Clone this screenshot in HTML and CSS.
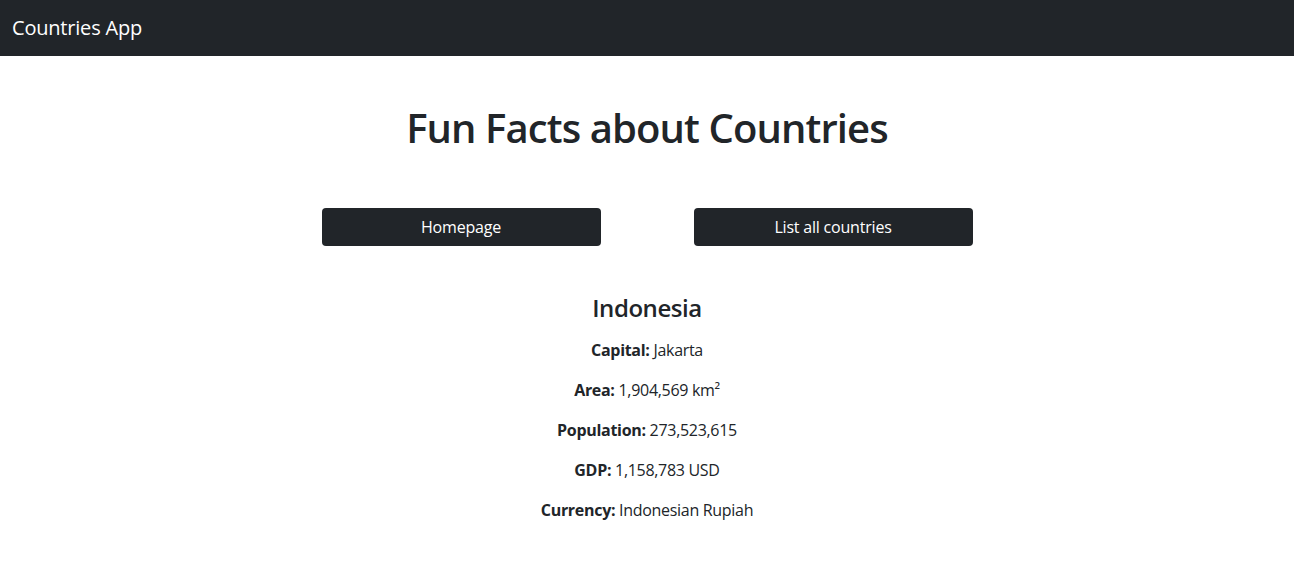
FILE: index.html
```html
<!DOCTYPE html>
<html lang="en">
<head>
<meta charset="utf-8">
<title>Countries App</title>
<link rel="stylesheet" href="styles.css">
</head>
<body>
<nav class="navbar">
  <span class="brand">Countries App</span>
</nav>
<main class="content">
  <h1 class="title">Fun Facts about Countries</h1>
  <div class="actions">
    <button class="btn">Homepage</button>
    <button class="btn">List all countries</button>
  </div>
  <section class="country">
    <h4 class="country-name">Indonesia</h4>
    <p><b>Capital:</b> Jakarta</p>
    <p><b>Area:</b> 1,904,569 km²</p>
    <p><b>Population:</b> 273,523,615</p>
    <p><b>GDP:</b> 1,158,783 USD</p>
    <p><b>Currency:</b> Indonesian Rupiah</p>
  </section>
</main>
</body>
</html>
```
FILE: styles.css
```css
* { box-sizing: border-box; }
body {
  margin: 0;
  font-family: "Open Sans", "DejaVu Sans", sans-serif;
  font-size: 16px;
  line-height: 1.5;
  color: #212529;
  background: #fff;
}
.navbar {
  height: 56px;
  background: #212529;
  display: flex;
  align-items: center;
  padding: 0 12px;
}
.brand {
  color: #fff;
  font-size: 20px;
  line-height: 30px;
  letter-spacing: -0.2px;
}
.content {
  text-align: center;
}
.title {
  margin: 48px 0 0;
  font-size: 40px;
  font-weight: 600;
  line-height: 48px;
  letter-spacing: -0.9px;
}
.actions {
  display: flex;
  justify-content: center;
  gap: 93px;
  margin-top: 56px;
}
.btn {
  width: 279px;
  height: 38px;
  border: 0;
  border-radius: 4px;
  background: #212529;
  color: #fff;
  font-family: inherit;
  font-size: 16px;
  letter-spacing: -0.2px;
}
.country {
  margin-top: 47px;
}
.country-name {
  margin: 0 0 16px;
  font-size: 24px;
  font-weight: 600;
  line-height: 29px;
  letter-spacing: -0.45px;
}
.country p {
  margin: 0 0 16px;
  letter-spacing: -0.3px;
}
.country b { font-weight: 700; }
```
